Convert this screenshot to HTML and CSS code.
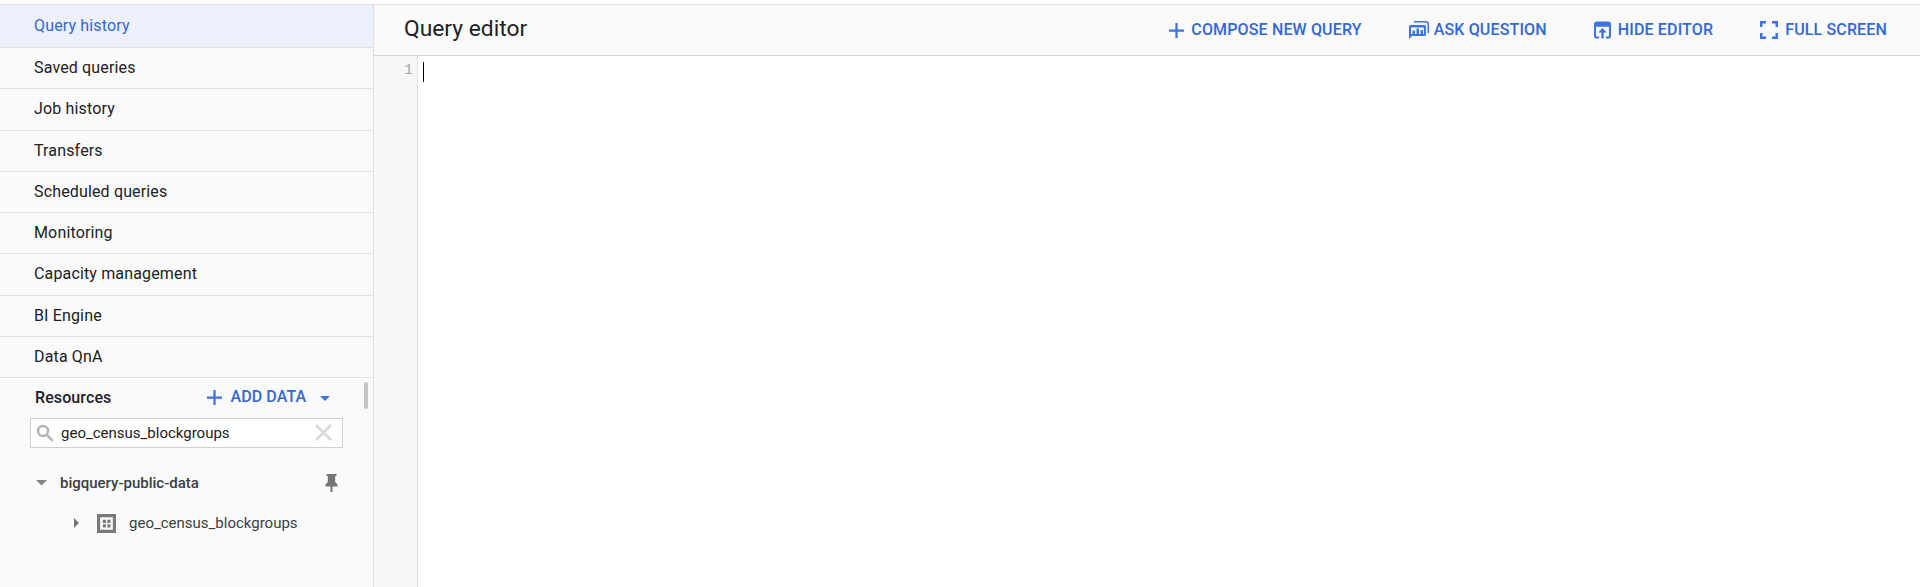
FILE: index.html
```html
<!DOCTYPE html>
<html lang="en">
<head>
<meta charset="utf-8">
<title>Query editor</title>
<link rel="stylesheet" href="styles.css">
</head>
<body>
<div class="app">
  <aside class="sidebar">
    <nav class="nav">
      <a class="nav-item active">Query history</a>
      <a class="nav-item">Saved queries</a>
      <a class="nav-item">Job history</a>
      <a class="nav-item">Transfers</a>
      <a class="nav-item">Scheduled queries</a>
      <a class="nav-item">Monitoring</a>
      <a class="nav-item">Capacity management</a>
      <a class="nav-item">BI Engine</a>
      <a class="nav-item">Data QnA</a>
    </nav>
    <section class="resources">
      <span class="scrollbar"></span>
      <div class="res-head">
        <span class="res-title">Resources</span>
        <span class="add-data">
          <svg class="plus-small" viewBox="0 0 16 16"><path d="M6.800 0h2.400v6.800H16v2.400H9.200V16H6.800V9.200H0V6.800h6.800z"/></svg>
          ADD DATA
          <svg class="caret-blue" viewBox="0 0 10 5"><path d="M0 0h10L5 5z"/></svg>
        </span>
      </div>
      <div class="search">
        <svg class="search-icon" viewBox="0 0 18 18"><circle cx="7" cy="7" r="5"/><path d="M10.800 10.800L16.800 16.800"/></svg>
        <span class="search-text">geo_census_blockgroups</span>
        <svg class="clear-icon" viewBox="0 0 16 16"><path d="M1 1l14 14M15 1L1 15"/></svg>
      </div>
      <div class="tree-row project">
        <svg class="caret-down" viewBox="0 0 10 5"><path d="M0 0h10L5 5z"/></svg>
        <span class="project-name">bigquery-public-data</span>
        <svg class="pin" viewBox="0 0 12 18"><path d="M1 0h10v2H9.700v6L12 10.500V12.500H7v5.500H5v-5.500H0V10.500L2.300 8V2H1z"/></svg>
      </div>
      <div class="tree-row dataset">
        <svg class="caret-right" viewBox="0 0 5 10"><path d="M0 0v10l5-5z"/></svg>
        <svg class="table-icon" viewBox="0 0 18 18"><path fill-rule="evenodd" d="M0 0h18v18H0zM3 3v12h12V3zM5.500 5.500h3v3h-3zM9.800 5.500h3v3h-3zM5.500 9.800h3v3h-3zM9.800 9.800h3v3h-3z"/></svg>
        <span class="dataset-name">geo_census_blockgroups</span>
      </div>
    </section>
  </aside>
  <main class="main">
    <header class="toolbar">
      <h1 class="title">Query editor</h1>
      <div class="actions">
        <a class="action">
          <svg class="plus-icon" viewBox="0 0 16 16"><path d="M6.800 0h2.400v6.800H16v2.400H9.200V16H6.800V9.200H0V6.800h6.800z"/></svg>
          COMPOSE NEW QUERY
        </a>
        <a class="action">
          <svg class="ask-icon" viewBox="0 0 20 18"><path fill-rule="evenodd" d="M5 0h12a3 3 0 0 1 3 3v9h-1.500V3A1.500 1.500 0 0 0 17 1.500H5zM1.500 4h14A1.500 1.500 0 0 1 17 5.500v8a1.500 1.500 0 0 1-1.500 1.500H3l-3 3V5.500A1.500 1.500 0 0 1 1.500 4zM2 6.500V13h1.500V9.500h2.500V13h1.500V7.500h2.500V13h1.500V9h2.500v4H15V6.500z"/></svg>
          ASK QUESTION
        </a>
        <a class="action">
          <svg class="hide-icon" viewBox="0 0 18 18"><path fill-rule="evenodd" d="M3 0h12a3 3 0 0 1 3 3v12a3 3 0 0 1-3 3h-2.500v-2.200H15a.8.8 0 0 0 .8-.8V5.500H2.200V15a.8.8 0 0 0 .8.8h2.500V18H3a3 3 0 0 1-3-3V3a3 3 0 0 1 3-3zM9 7l4.500 4.700H10.300V18H7.700v-6.300H4.500z"/></svg>
          HIDE EDITOR
        </a>
        <a class="action">
          <svg class="full-icon" viewBox="0 0 18 18"><path d="M0 0h6v2.500H2.500V6H0zM12 0h6v6h-2.500V2.500H12zM0 12h2.500v3.500H6V18H0zM15.500 12H18v6h-6v-2.500h3.500z"/></svg>
          FULL SCREEN
        </a>
      </div>
    </header>
    <div class="editor">
      <div class="gutter"><span class="line-no">1</span></div>
      <div class="code"><span class="cursor"></span></div>
    </div>
  </main>
</div>
</body>
</html>
```

FILE: styles.css
```css
* { box-sizing: border-box; }
html, body { margin: 0; height: 100%; }
body {
  font-family: Roboto, "Liberation Sans", sans-serif;
  color: #202124;
  background: #fff;
  overflow: hidden;
}
.app {
  display: flex;
  height: 587px;
  padding-top: 4px;
}
.sidebar {
  width: 374px;
  flex: none;
  background: #fafafa;
  border-top: 1px solid #e0e0e0;
  border-right: 1px solid #e0e0e0;
  display: flex;
  flex-direction: column;
}
.nav-item {
  display: flex;
  align-items: center;
  height: 41.250px;
  padding: 0 0 1px 34px;
  font-size: 16px;
  letter-spacing: .15px;
  border-bottom: 1px solid #e0e0e0;
  flex: none;
}
.nav-item.active {
  height: 43px;
  color: #3367d6;
  background: #ebf0fa;
}
.resources {
  position: relative;
  flex: 1;
  padding: 0 0 0 30px;
}
.scrollbar {
  position: absolute;
  left: 364px;
  top: 4px;
  width: 4px;
  height: 27px;
  border-radius: 2px;
  background: #c4c4c4;
}
.res-head {
  display: flex;
  align-items: center;
  height: 40px;
  padding: 0 0 2px 5px;
}
.res-title {
  font-size: 16px;
  font-weight: 500;
  color: #202124;
  letter-spacing: .1px;
}
.add-data {
  display: flex;
  align-items: center;
  margin-left: 96px;
  margin-top: -2px;
  color: #3367d6;
  font-size: 16px;
  letter-spacing: .1px;
  font-weight: 500;
}
.plus-small { width: 15px; height: 15px; fill: #3f73e0; margin-right: 8px; margin-top: 2px; }
.caret-blue { width: 10px; height: 5px; fill: #3f73e0; margin-left: 14px; margin-top: 4px; }
.search {
  display: flex;
  align-items: center;
  width: 313px;
  height: 30px;
  border: 1px solid #d0d0d0;
  background: #fff;
  padding: 0 10px 0 5px;
}
.search-icon {
  width: 18px;
  height: 18px;
  fill: none;
  stroke: #b3b3b3;
  stroke-width: 2.400;
  flex: none;
}
.search-text {
  flex: 1;
  font-size: 15px;
  margin-left: 7px;
}
.clear-icon { width: 17px; height: 17px; stroke: #d9d9d9; stroke-width: 2.600; flex: none; margin-top: -2px; }
.tree-row { display: flex; align-items: center; }
.project { height: 40px; margin-top: 15px; padding-right: 30px; }
.caret-down { width: 11px; height: 5.500px; fill: #80868b; margin-left: 6px; flex: none; }
.project-name {
  flex: 1;
  font-size: 15px;
  font-weight: 500;
  color: #3c4043;
  margin-left: 13px;
}
.pin { width: 13px; height: 18px; fill: #757575; margin-right: 5px; flex: none; }
.dataset { height: 40px; padding-left: 44px; }
.caret-right { width: 5px; height: 10px; fill: #757575; flex: none; }
.table-icon { width: 19px; height: 19px; fill: #7a7a7a; margin-left: 18px; flex: none; }
.dataset-name {
  font-size: 15px;
  color: #3c4043;
  margin-left: 13px;
}
.main { flex: 1; display: flex; flex-direction: column; min-width: 0; }
.toolbar {
  display: flex;
  align-items: center;
  justify-content: space-between;
  height: 52px;
  background: #fafafa;
  border-top: 1px solid #e0e0e0;
  border-bottom: 1px solid #d8d8d8;
  padding: 0 33px 0 30px;
  flex: none;
}
.title {
  margin: -3px 0 0;
  font-size: 22.800px;
  font-weight: 400;
  color: #202124;
}
.actions { display: flex; align-items: center; gap: 47px; margin-top: -1px; }
.action {
  display: flex;
  align-items: center;
  color: #3367d6;
  font-size: 16px;
  letter-spacing: .15px;
  font-weight: 500;
}
.action svg { fill: #3f73e0; flex: none; margin-right: 7px; }
.plus-icon { width: 15px; height: 15px; margin-top: 2px; }
.ask-icon { width: 20px; height: 18px; margin-right: 5px !important; }
.hide-icon { width: 17px; height: 18px; }
.full-icon { width: 18px; height: 18px; }
.editor { flex: 1; display: flex; min-height: 0; }
.gutter {
  width: 44px;
  flex: none;
  background: #f7f7f7;
  border-right: 1px solid #e0e0e0;
  text-align: right;
  padding: 6px 4px 0 0;
  font-family: "Liberation Mono", monospace;
  font-size: 15px;
  line-height: 17px;
  color: #a8a8a8;
}
.code { flex: 1; padding: 6px 0 0 5px; background: #fff; }
.cursor { display: block; width: 1px; height: 20px; background: #000; }
```
